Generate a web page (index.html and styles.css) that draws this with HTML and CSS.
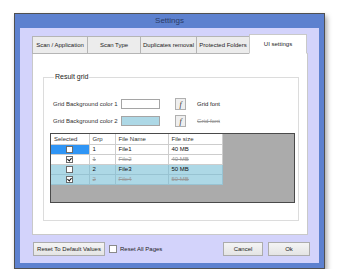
FILE: index.html
```
<!DOCTYPE html>
<html lang="en">
<head>
    <meta charset="UTF-8">
    <title>Settings</title>
    <link rel="stylesheet" href="styles.css">
</head>
<body>
    <div class="window">
        <div class="titlebar">Settings</div>
        <div class="client">
            <div class="tabs">
                <div class="tab t1">Scan / Application</div>
                <div class="tab t2">Scan Type</div>
                <div class="tab t3">Duplicates removal</div>
                <div class="tab t4">Protected Folders</div>
                <div class="tab t5 active">UI settings</div>
            </div>
            <div class="panel">
                <fieldset class="group">
                    <legend>Result grid</legend>
                    <div class="color-row">
                        <span class="color-label">Grid Background color 1</span>
                        <span class="swatch"></span>
                        <span class="font-btn">f</span>
                        <span class="font-label">Grid font</span>
                    </div>
                    <div class="color-row">
                        <span class="color-label">Grid Background color 2</span>
                        <span class="swatch blue"></span>
                        <span class="font-btn">f</span>
                        <span class="font-label struck">Grid font</span>
                    </div>
                    <div class="grid">
                        <table>
                            <colgroup>
                                <col class="c-sel"><col class="c-grp"><col class="c-name"><col class="c-size">
                            </colgroup>
                            <tr class="head">
                                <th>Selected</th><th>Grp</th><th>File Name</th><th>File size</th>
                            </tr>
                            <tr>
                                <td class="sel current"><span class="cb"></span></td><td>1</td><td>File1</td><td>40 MB</td>
                            </tr>
                            <tr class="dup">
                                <td class="sel"><span class="cb checked"></span></td><td>1</td><td>File2</td><td>40 MB</td>
                            </tr>
                            <tr class="alt">
                                <td class="sel"><span class="cb"></span></td><td>2</td><td>File3</td><td>50 MB</td>
                            </tr>
                            <tr class="alt dup">
                                <td class="sel"><span class="cb checked"></span></td><td>2</td><td>File4</td><td>50 MB</td>
                            </tr>
                        </table>
                    </div>
                </fieldset>
            </div>
            <div class="footer">
                <div class="btn reset">Reset To Default Values</div>
                <span class="cb box"></span>
                <span class="reset-label">Reset All Pages</span>
                <div class="btn cancel">Cancel</div>
                <div class="btn ok">Ok</div>
            </div>
        </div>
    </div>
</body>
</html>
```

FILE: styles.css
```
* { box-sizing: border-box; }
body { margin: 0; background: #fff; font-family: "Liberation Sans", Arial, sans-serif; font-size: 6px; color: #222; }

.window { margin: 13px 0 0 14px; width: 311px; border: 1px solid #505050; background: #5d81cf; padding: 0 5px 5px 5px; box-shadow: 2px 3px 5px rgba(0,0,0,0.35); }
.titlebar { height: 14px; line-height: 14px; text-align: center; font-size: 8px; color: #2b3b66; }
.client { background: #d3d3fb; padding: 7px 10px 7px 12px; height: 235px; }

.tabs { display: flex; align-items: flex-end; height: 19px; margin-bottom: -1px; }
.tab { height: 18px; border: 1px solid #b5b5b5; background: #ececec; display: flex; align-items: center; justify-content: center; color: #222; }
.tab + .tab { margin-left: -1px; }
.t1 { width: 56px; }
.t2 { width: 54px; }
.t3 { width: 57px; }
.t4 { width: 54px; }
.t5 { width: 58px; }
.tab.active { height: 20px; background: #fff; border-color: #c9c9c9; border-bottom-color: #fff; position: relative; z-index: 1; }

.panel { width: 276px; height: 182px; background: #fff; border: 1px solid #c9c9c9; padding: 19px 9px 0 10px; }

.group { margin: 0; min-width: 0; width: 256px; height: 148px; border: 1px solid #dcdcdc; padding: 17px 6px 0 6px; }
.group legend { font-size: 7px; line-height: 8px; padding: 0 1px; margin-left: 4px; color: #222; }

.color-row { display: flex; align-items: center; height: 12px; padding-left: 3px; }
.color-row + .color-row { margin-top: 5px; }
.color-label { width: 68px; white-space: nowrap; color: #333; }
.swatch { width: 39px; height: 10px; border: 1px solid #a5a5a5; background: #fff; }
.swatch.blue { background: #add8e6; }
.font-btn { margin-left: 15px; width: 11px; height: 12px; border: 1px solid #b0b0b0; background: #efefef; font-family: "Liberation Serif", serif; font-style: italic; font-size: 8px; display: flex; align-items: center; justify-content: center; color: #333; }
.font-label { margin-left: 11px; color: #222; }
.font-label.struck { color: #999; text-decoration: line-through; }

.grid { margin-top: 6px; width: 245px; height: 70px; border: 1px solid #4a4a4a; background: #ababab; }
.grid table { border-collapse: collapse; table-layout: fixed; width: 171px; }
.c-sel { width: 38px; }
.c-grp { width: 26px; }
.c-name { width: 53px; }
.c-size { width: 54px; }
.grid th, .grid td { height: 10px; padding: 0 0 0 3px; border: 1px solid #cdcdcd; text-align: left; font-weight: normal; white-space: nowrap; line-height: 8px; background: #fff; color: #111; }
.grid tr:first-child th { border-top: 0; }
.grid th:first-child, .grid td:first-child { border-left: 0; }
.grid th { color: #333; }
.grid td.sel { text-align: center; padding: 0; }
.grid td.current { background: #2f95f5; }
.grid tr.alt td { background: #add8e6; border-color: #98c3d2; }
.grid tr.dup td { color: #9a9a9a; text-decoration: line-through; }

.cb { display: inline-block; width: 7px; height: 7px; border: 1px solid #6a6a6a; background: #fff; vertical-align: middle; position: relative; }
.cb.checked::after { content: ""; position: absolute; left: 1px; top: 0; width: 2px; height: 3px; border: solid #111; border-width: 0 1px 1px 0; transform: rotate(40deg); }

.footer { display: flex; align-items: center; height: 14px; margin-top: 7px; }
.btn { height: 14px; border: 1px solid #acacac; background: linear-gradient(#f4f4f4, #e4e4e4); display: flex; align-items: center; justify-content: center; color: #222; }
.reset { margin-left: 1px; width: 72px; }
.footer .box { margin-left: 4px; width: 8px; height: 8px; border-color: #8a8a8a; }
.reset-label { margin-left: 3px; color: #222; }
.cancel { margin-left: auto; width: 40px; }
.ok { margin-left: 5px; width: 42px; margin-right: -1px; }
```
